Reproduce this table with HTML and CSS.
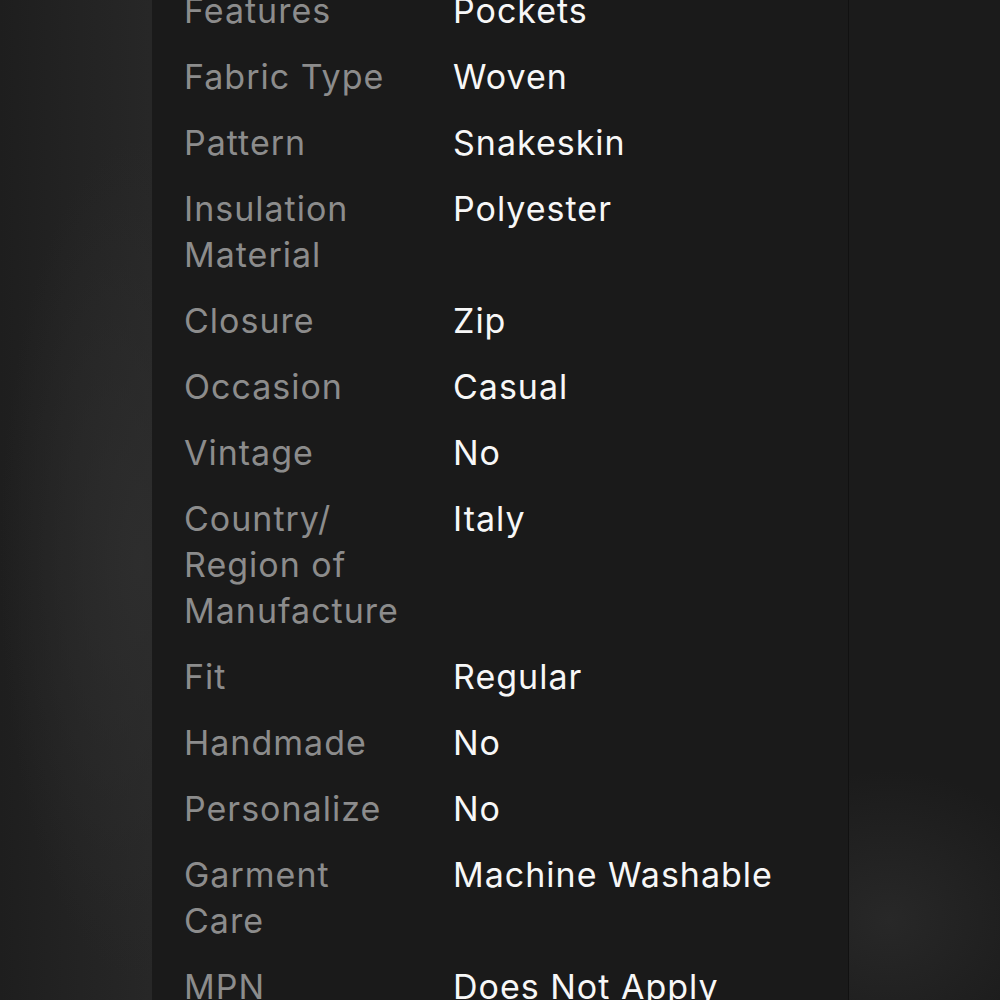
FILE: index.html
```html
<!DOCTYPE html>
<html lang="en">
<head>
<meta charset="utf-8">
<title>Item specifics</title>
<link rel="stylesheet" href="styles.css">
</head>
<body>
<div class="stage">
  <aside class="side side-left"></aside>
  <main class="panel">
    <dl class="specs">
      <div class="row"><dt>Features</dt><dd>Pockets</dd></div>
      <div class="row"><dt>Fabric Type</dt><dd>Woven</dd></div>
      <div class="row"><dt>Pattern</dt><dd>Snakeskin</dd></div>
      <div class="row"><dt>Insulation Material</dt><dd>Polyester</dd></div>
      <div class="row"><dt>Closure</dt><dd>Zip</dd></div>
      <div class="row"><dt>Occasion</dt><dd>Casual</dd></div>
      <div class="row"><dt>Vintage</dt><dd>No</dd></div>
      <div class="row"><dt>Country/ Region of Manufacture</dt><dd>Italy</dd></div>
      <div class="row"><dt>Fit</dt><dd>Regular</dd></div>
      <div class="row"><dt>Handmade</dt><dd>No</dd></div>
      <div class="row"><dt>Personalize</dt><dd>No</dd></div>
      <div class="row"><dt>Garment Care</dt><dd>Machine Washable</dd></div>
      <div class="row"><dt>MPN</dt><dd>Does Not Apply</dd></div>
    </dl>
  </main>
  <aside class="side side-right"></aside>
</div>
</body>
</html>
```

FILE: styles.css
```css
html, body {
  margin: 0;
  padding: 0;
  height: 100%;
  overflow: hidden;
  background: #1c1c1c;
}

.stage {
  display: flex;
  height: 1000px;
  width: 1000px;
}

.side {
  flex: none;
}

.side-left {
  width: 152px;
  background:
    radial-gradient(ellipse 140px 420px at 140px 560px, rgba(46,46,46,0.9), rgba(46,46,46,0) 100%),
    linear-gradient(90deg, #1e1e1e 0px, #232323 80px, #272727 150px);
}

.side-right {
  width: 151px;
  border-left: 1px solid #111111;
  background:
    radial-gradient(ellipse 170px 150px at 40px 920px, rgba(40,40,40,1), rgba(40,40,40,0) 100%),
    #1b1b1b;
}

.panel {
  flex: none;
  width: 696px;
  background: #1a1a1a;
  padding: 0 32px;
  box-sizing: border-box;
  font-family: Inter, "Noto Sans", sans-serif;
  font-size: 34px;
  letter-spacing: 1px;
  line-height: 46px;
}

.specs {
  margin: -12px 0 0 0;
  display: flex;
  flex-direction: column;
  gap: 20px;
}

.row {
  display: grid;
  grid-template-columns: 230px 1fr;
  column-gap: 39px;
}

.row dt {
  color: #8c8c8c;
  margin: 0;
}

.row dd {
  color: #f7f7f7;
  margin: 0;
}
```
